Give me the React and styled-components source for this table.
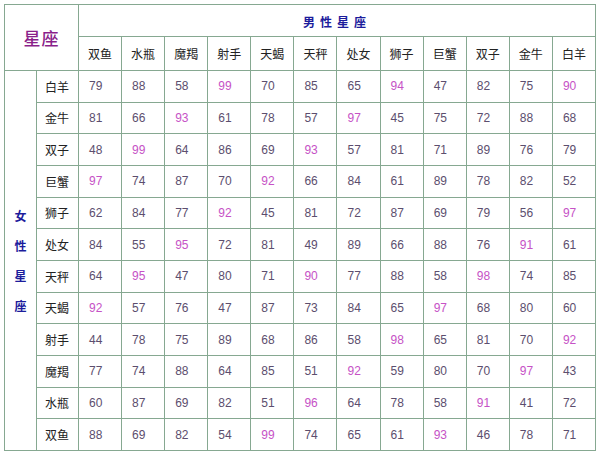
import React from "react";
import styled, { createGlobalStyle } from "styled-components";

const Global = createGlobalStyle`
  html, body { margin: 0; padding: 0; background: #fff; }
  body { font-family: "Noto Sans CJK SC", "Liberation Sans", sans-serif; }
`;

const Page = styled.div`
  padding: 4px 0 0 4px;
  width: 600px;
  height: 454px;
  box-sizing: border-box;
`;

const Grid = styled.div`
  width: 592px;
  height: 447px;
  box-sizing: border-box;
  display: grid;
  grid-template-columns: 31px 41px repeat(12, 1fr);
  grid-template-rows: 31px 33px repeat(12, 1fr);
  gap: 1px;
  padding: 1px;
  background: #86a891;
  border: 1px solid #c4d2c8;
  border-width: 0;
`;

const Cell = styled.div`
  background: #fff;
  display: flex;
  align-items: center;
  justify-content: ${(p) => (p.$center ? "center" : "flex-start")};
  padding-left: ${(p) => (p.$center ? 0 : p.$pad || 9)}px;
  font-size: 12px;
  color: #222;
  overflow: hidden;
  white-space: nowrap;
`;

const Corner = styled(Cell)`
  grid-column: 1 / span 2;
  grid-row: 1 / span 2;
  font-size: 17px;
  color: #8a1f8a;
  font-weight: 500;
  letter-spacing: 1px;
`;

const MaleTitle = styled(Cell)`
  grid-column: 3 / span 12;
  grid-row: 1;
  color: #1c1c9c;
  font-weight: 700;
  letter-spacing: 5px;
  padding-top: 2px;
`;

const FemaleTitle = styled(Cell)`
  grid-column: 1;
  grid-row: 3 / span 12;
  flex-direction: column;
  color: #1c1c9c;
  font-weight: 700;
  line-height: 30px;
  padding-top: 2px;
`;

const Num = styled(Cell)`
  font-family: "Liberation Sans", Arial, sans-serif;
  color: ${(p) => (p.$hi ? "#c652c6" : "#5c4e6e")};
  padding-left: 10px;
`;

const cols = ["双鱼", "水瓶", "魔羯", "射手", "天蝎", "天秤", "处女", "狮子", "巨蟹", "双子", "金牛", "白羊"];

const rows = [
  ["白羊", [79, 88, 58, 99, 70, 85, 65, 94, 47, 82, 75, 90]],
  ["金牛", [81, 66, 93, 61, 78, 57, 97, 45, 75, 72, 88, 68]],
  ["双子", [48, 99, 64, 86, 69, 93, 57, 81, 71, 89, 76, 79]],
  ["巨蟹", [97, 74, 87, 70, 92, 66, 84, 61, 89, 78, 82, 52]],
  ["狮子", [62, 84, 77, 92, 45, 81, 72, 87, 69, 79, 56, 97]],
  ["处女", [84, 55, 95, 72, 81, 49, 89, 66, 88, 76, 91, 61]],
  ["天秤", [64, 95, 47, 80, 71, 90, 77, 88, 58, 98, 74, 85]],
  ["天蝎", [92, 57, 76, 47, 87, 73, 84, 65, 97, 68, 80, 60]],
  ["射手", [44, 78, 75, 89, 68, 86, 58, 98, 65, 81, 70, 92]],
  ["魔羯", [77, 74, 88, 64, 85, 51, 92, 59, 80, 70, 97, 43]],
  ["水瓶", [60, 87, 69, 82, 51, 96, 64, 78, 58, 91, 41, 72]],
  ["双鱼", [88, 69, 82, 54, 99, 74, 65, 61, 93, 46, 78, 71]],
];

export default function App() {
  return (
    <Page>
      <Global />
      <Grid>
        <Corner $center>星座</Corner>
        <MaleTitle $center>男性星座</MaleTitle>
        {cols.map((c) => (
          <Cell key={c} $pad={9}>{c}</Cell>
        ))}
        <FemaleTitle $center>
          <span>女</span>
          <span>性</span>
          <span>星</span>
          <span>座</span>
        </FemaleTitle>
        {rows.map(([name, vals]) => (
          <React.Fragment key={name}>
            <Cell $pad={8}>{name}</Cell>
            {vals.map((v, i) => (
              <Num key={i} $hi={v >= 90}>{v}</Num>
            ))}
          </React.Fragment>
        ))}
      </Grid>
    </Page>
  );
}
